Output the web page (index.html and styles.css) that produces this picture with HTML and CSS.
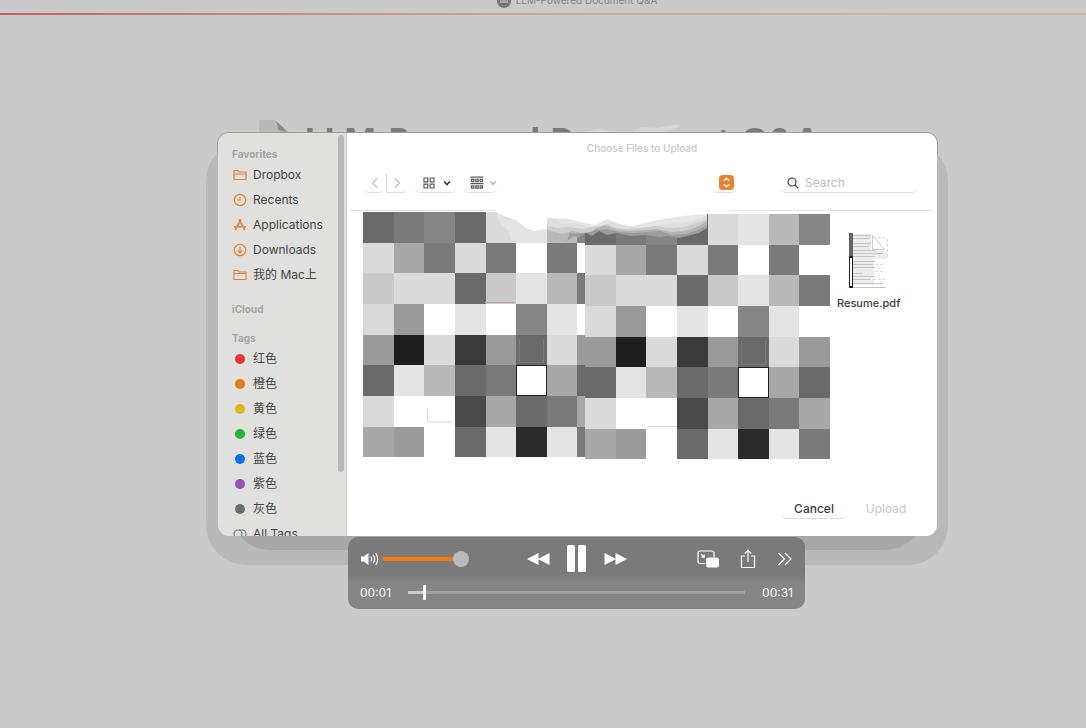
FILE: index.html
```html
<!DOCTYPE html>
<html lang="en">
<head>
<meta charset="utf-8">
<title>LLM-Powered Document Q&amp;A</title>
<link rel="stylesheet" href="styles.css">
</head>
<body>
<header class="tabbar">
  <svg class="tab-icon" viewBox="0 0 14 14" aria-hidden="true"><circle cx="7" cy="7" r="7" fill="#777"/><path d="M3 5h8v4H3z" fill="#a8a8a8"/></svg>
  <span>LLM-Powered Document Q&amp;A</span>
</header>
<main class="page">
  <div class="page-title">
    <svg class="title-icon" viewBox="0 0 30 40" aria-hidden="true"><path d="M0 0h16l14 12v28H0z" fill="#b9b9b9"/><path d="M14 0q5 2 5 10l9 2Q22 4 14 0z" fill="#8c8c8c"/></svg>
    <h1>LLM-Powered Document Q&amp;A</h1>
    <svg class="smudge" viewBox="0 0 110 14" aria-hidden="true"><path fill="#d6d6d6" d="M0 9l12-3 14 2 22 1 8-5 16 1 22-4-2 4-14 4 6 5H0z"/></svg>
  </div>

  <section class="dialog" role="dialog" aria-labelledby="dialog-title">
    <nav class="sidebar" aria-label="Locations">
      <h2>Favorites</h2>
      <a href="#"><svg viewBox="0 0 14 14"><path d="M1 11.5v-9h4l1.200 1.500H13v7.500zM1 6h12"/></svg>Dropbox</a>
      <a href="#"><svg viewBox="0 0 14 14"><circle cx="7" cy="7" r="5.700"/><path d="M7 3.500V7H4"/></svg>Recents</a>
      <a href="#"><svg viewBox="0 0 14 14"><path d="M6 1.500l5.800 10.500M8 1.500L2.200 12M.800 8.800h8M11 8.800h2.200" stroke-width="1.600"/></svg>Applications</a>
      <a href="#"><svg viewBox="0 0 14 14"><circle cx="7" cy="7" r="5.700"/><path d="M7 3.800v6M4.800 7.700L7 9.900l2.200-2.200"/></svg>Downloads</a>
      <a href="#"><svg viewBox="0 0 14 14"><path d="M1 11.500v-9h4l1.200 1.500H13v7.500zM1 5.500h12"/></svg>我的 Mac上</a>
      <h2 class="section">iCloud</h2>
      <h2 class="section">Tags</h2>
      <a href="#"><i class="dot red"></i>红色</a>
      <a href="#"><i class="dot orange"></i>橙色</a>
      <a href="#"><i class="dot yellow"></i>黄色</a>
      <a href="#"><i class="dot green"></i>绿色</a>
      <a href="#"><i class="dot blue"></i>蓝色</a>
      <a href="#"><i class="dot purple"></i>紫色</a>
      <a href="#"><i class="dot gray"></i>灰色</a>
      <a href="#"><svg class="all-tags" viewBox="0 0 14 14"><circle cx="5" cy="7" r="4"/><path d="M6 3h3a4 4 0 0 1 0 8"/></svg>All Tags</a>
      <span class="scrollbar"></span>
    </nav>

    <div class="browser">
      <h2 class="dialog-title" id="dialog-title">Choose Files to Upload</h2>
      <div class="toolbar">
        <div class="history">
          <button type="button" class="tool faint" aria-label="Back"><svg viewBox="0 0 10 12" width="10" height="12"><path d="M7 1.500L2.500 6 7 10.500"/></svg></button>
          <button type="button" class="tool faint" aria-label="Forward"><svg viewBox="0 0 10 12" width="10" height="12"><path d="M3 1.500L7.500 6 3 10.500"/></svg></button>
        </div>
        <button type="button" class="tool view" aria-label="Icon view">
          <svg viewBox="0 0 12 12" width="12" height="12"><path d="M1 1h3.800v3.800H1zM7.200 1H11v3.800H7.200zM1 7.200h3.800V11H1zM7.200 7.200H11V11H7.200z"/></svg>
          <svg viewBox="0 0 8 8" width="8" height="8" class="dark"><path d="M1 2.500l3 3 3-3" stroke-width="1.700"/></svg>
        </button>
        <button type="button" class="tool group" aria-label="Group items">
          <svg viewBox="0 0 14 14" width="14" height="14"><path d="M.500 1.200h13M.500 7.700h13"/><path d="M1.500 3.300h2.400v2.400H1.500zM5.800 3.300h2.400v2.400H5.800zM10.100 3.300h2.400v2.400h-2.400zM1.500 9.800h2.400v2.400H1.500zM5.800 9.800h2.400v2.400H5.800zM10.100 9.800h2.400v2.400h-2.400z"/></svg>
          <svg viewBox="0 0 8 8" width="8" height="8" class="pale"><path d="M1.500 2.500L4 5.200l2.500-2.700" stroke-width="1.300"/></svg>
        </button>
        <button type="button" class="tool location" aria-label="Choose location">
          <svg viewBox="0 0 15 15" width="15" height="15"><rect width="15" height="15" rx="3.500" fill="#e8842c" stroke="none"/><path d="M4.800 5.800l2.700-2.600 2.700 2.600M4.800 9.200l2.700 2.600 2.700-2.600" stroke="#fff" stroke-width="1.500"/></svg>
        </button>
        <label class="search">
          <svg viewBox="0 0 12 12" width="12" height="12" aria-hidden="true"><circle cx="5" cy="5" r="4"/><path d="M8 8l3.300 3.300"/></svg>
          <input type="search" placeholder="Search" aria-label="Search">
        </label>
      </div>

      <div class="files">
        <svg class="mosaic" viewBox="0 0 467 248" aria-hidden="true">
          <defs>
            <g id="tiles" shape-rendering="crispEdges">
              <path fill="#6a6a6a" d="M0 0h31v31H0zM92 0h31v31H92zM92 61h31v31H92zM153 123h31v31h-31zM0 153h31v31H0zM92 153h31v31H92zM214 153h31v31h-31zM153 184h31v31h-31zM92 215h31v30H92z"/>
              <path fill="#7a7a7a" d="M31 0h30v31H31zM61 31h31v30H61zM123 31h30v30h-30zM184 31h30v30h-30zM214 61h31v31h-31zM123 153h30v31h-30zM184 184h30v31h-30zM214 215h31v30h-31z"/>
              <path fill="#858585" d="M61 0h31v31H61zM214 0h31v31h-31zM153 92h31v31h-31z"/>
              <path fill="#dadada" d="M123 0h30v31h-30zM0 31h31v30H0zM92 31h31v30H92zM31 61h61v31H31zM0 92h31v31H0zM61 123h31v30H61zM184 123h30v30h-30zM0 184h31v31H0z"/>
              <path fill="#e4e4e4" d="M153 0h31v31h-31zM153 61h31v31h-31zM92 92h31v31H92zM184 92h30v31h-30zM31 153h30v31H31zM123 215h30v30h-30zM184 215h30v30h-30z"/>
              <path fill="#b9b9b9" d="M184 0h30v31h-30zM184 61h30v31h-30zM61 153h31v31H61z"/>
              <path fill="#a8a8a8" d="M31 31h30v30H31zM184 153h30v31h-30zM123 184h30v31h-30zM214 184h31v31h-31zM0 215h31v30H0z"/>
              <path fill="#c9c9c9" d="M0 61h31v31H0zM123 61h30v31h-30z"/>
              <path fill="#9a9a9a" d="M31 92h30v31H31zM0 123h31v30H0zM123 123h30v30h-30zM214 123h31v30h-31zM31 215h30v30H31z"/>
              <path fill="#1e1e1e" d="M31 123h30v30H31z"/>
              <path fill="#3a3a3a" d="M92 123h31v30H92z"/>
              <path fill="#4a4a4a" d="M92 184h31v31H92z"/>
              <path fill="#2b2b2b" d="M153 215h31v30h-31z"/>
              <path fill="#fff" stroke="#222" d="M153.500 153.500h30v30h-30z"/>
              <path fill="none" stroke="#7a7a7a" d="M156.500 127v23h24v-23"/>
            </g>
          </defs>
          <use href="#tiles" x="0" y="1"/>
          <path fill="#fff" d="M222 0h245v248H222z"/>
          <use href="#tiles" x="222" y="3"/>
          <path fill="#9c9c9c" d="M214 0h130v17l-8 5-12 3-8 2-12-2-8 1-12-2-16 1-14-3-10 2-8-4-7 5-6-3-8 5-4-2-7 5z"/>
          <path fill="#b4b4b4" d="M214 0h130v14l-9 5-12 4-14 1-12-4-14 1-12 1-16-1-10-3-8 1-6-2-8 4-9 2-10-1z"/>
          <path fill="#cdcdcd" d="M184 0h160v10l-8 5-14 5-14 1-14-3-14 1-16 1-12-2-10-4-6 2-8 5-10 1-8-2-10 3-12-3-8-3z"/>
          <path fill="#dedede" d="M184 0h160v8l-22 8-16 1-14-2-14 2-14 1-14-2-8-5-10 4-12 3-14-2-10 1-12-2z"/>
          <path fill="#e6e6e6" d="M184 0h160v5l-18 6-22 2-14 2-14 2-14-2-12-5-8 4-14 2-18-4-12 1z"/>
          <path fill="#e4e4e4" d="M133 1h20v29h-4l-4-10-8-8z"/>
          <path fill="#fff" d="M131 0h213v3l-24 2-26 4-24 6-14-2-12-5-12 6-10-2-16-4-22-1v11l-13 2-8-3-10-8-12-4z"/>
          <g fill="none" stroke="#d8d8d8"><path d="M64.500 198v13h25M286 215.500h28"/><path stroke="#c0aaa6" d="M122 91.500h30"/></g>
        </svg>
        <figure class="file">
          <svg viewBox="0 0 40 56" width="40" height="56" aria-hidden="true">
            <path fill="#ececec" d="M3 1h19v17h16v8H25v26H3z"/>
            <path fill="none" stroke="#c4c4c4" d="M4 2.500h18M4 5.500h17M4 10.500h18M4 13.500h16M4 17.500h22M4 20.500h30M4 23.500h22M4 28.500h22M4 31.500h20M4 34.500h22M4 40.500h10M4 43.500h22M4 46.500h18M4 50.500h30M4 54.500h33"/>
            <path fill="none" stroke="#d8d8d8" stroke-dasharray="3 2" d="M24 4.500h12M26 31.500h8M26 38.500h10M24 46.500h12M38.500 6v20"/>
            <path fill="#fff" stroke="#ccc" d="M23.500 2.500v14h12z"/>
            <path fill="#666" d="M0 0h4v24H0z"/><path fill="#222" d="M0 23h4v32H0z"/><path fill="#fff" d="M1 25h2v28H1z"/>
          </svg>
          <figcaption>Resume.pdf</figcaption>
        </figure>
      </div>

      <footer class="actions">
        <button type="button" class="cancel">Cancel</button>
        <button type="button" class="upload" disabled>Upload</button>
      </footer>
    </div>
  </section>

  <section class="player" aria-label="Video player">
    <div class="controls">
      <div class="volume">
        <svg viewBox="0 0 20 14" width="20" height="14" aria-hidden="true"><path fill="#fff" d="M1 4.500h3L8.500 1v12L4 9.500H1z"/><path fill="none" stroke="#fff" stroke-width="1.200" stroke-linecap="round" d="M11 5q1.200 2 0 4M13.400 3.200q2.400 3.800 0 7.600M16 1.500q3.400 5.500 0 11"/></svg>
        <input type="range" class="volume-range" min="0" max="100" value="100" aria-label="Volume">
      </div>
      <div class="transport">
        <button type="button" aria-label="Rewind"><svg viewBox="0 0 24 14" width="24" height="14"><path d="M12.500 1v12L1 7zM23.500 1v12L12 7z"/></svg></button>
        <button type="button" aria-label="Pause"><svg viewBox="0 0 20 28" width="20" height="28"><rect width="8" height="27" rx="1.500"/><rect x="11" width="8" height="27" rx="1.500"/></svg></button>
        <button type="button" aria-label="Fast forward"><svg viewBox="0 0 24 14" width="24" height="14"><path d="M.500 1v12L12 7zM11.500 1v12L23 7z"/></svg></button>
      </div>
      <div class="extras">
        <button type="button" aria-label="Picture in picture"><svg viewBox="0 0 22 18" width="22" height="18"><path class="line" d="M8 13.500H3a2 2 0 0 1-2-2V3a2 2 0 0 1 2-2h12a2 2 0 0 1 2 2v4M4 4l3 3M7.200 4.400v2.800H4.400"/><rect x="9" y="7.500" width="13" height="10" rx="2.500"/></svg></button>
        <button type="button" aria-label="Share"><svg viewBox="0 0 16 20" width="16" height="20"><path class="line" d="M5 7H1.500v11.500h13V7H11M8 13V1.500M4.800 4.500L8 1.300l3.200 3.200"/></svg></button>
        <button type="button" aria-label="More"><svg viewBox="0 0 16 14" width="16" height="14"><path class="line" d="M1.500 1l6 6-6 6M8 1l6 6-6 6"/></svg></button>
      </div>
    </div>
    <div class="timeline">
      <span>00:01</span>
      <input type="range" class="seek" min="0" max="31" value="1.4" step="any" aria-label="Position">
      <span>00:31</span>
    </div>
  </section>
</main>
</body>
</html>
```
FILE: styles.css
```css
* { box-sizing: border-box; }

body {
  margin: 0;
  min-height: 100vh;
  overflow: hidden;
  background: #cacaca;
  color: #3c3c3c;
  font: 12px/16px Inter, "Noto Sans CJK SC", sans-serif;
}

h1, h2, figure { margin: 0; }
button { padding: 0; border: 0; background: none; color: inherit; font: inherit; }
button svg { display: block; }

.tabbar {
  display: flex;
  align-items: flex-end;
  justify-content: center;
  gap: 5px;
  height: 15px;
  padding: 0 0 5px 68px;
  overflow: hidden;
  border-bottom: 2px solid;
  border-image: linear-gradient(90deg, #c4625c, #c9a592 45%, #cdb99f) 1;
  color: #858585;
  font-size: 10px;
}
.tab-icon { width: 14px; height: 14px; }

.page { isolation: isolate; }
.page-title {
  position: relative;
  display: flex;
  justify-content: center;
  gap: 15px;
  padding: 105px 8px 0 0;
}
.title-icon { width: 30px; height: 40px; }
h1 { color: #7a7a7a; font: 700 35px/42px "Open Sans", sans-serif; white-space: nowrap; }
.smudge {
  position: absolute;
  top: 108px;
  left: 585px;
  width: 110px;
  height: 14px;
}

.dialog {
  position: absolute;
  top: 133px;
  left: 218px;
  display: flex;
  width: 719px;
  height: 403px;
  border-radius: 11px;
  box-shadow: 0 0 0 1px #9e9e9e;
  isolation: isolate;
}
.dialog::before, .dialog::after {
  content: "";
  position: absolute;
  z-index: -2;
  background: #b9b9b9;
  inset: 8px -11px -29px -12px;
  border-radius: 40px;
}
.dialog::after {
  z-index: -1;
  inset: 300px 12px -14px 12px;
  background: #a8a8a8;
}

.sidebar {
  position: relative;
  width: 129px;
  padding: 13px 0 0 14px;
  overflow: hidden;
  border-right: 1px solid #cfcfcf;
  border-radius: 11px 0 0 11px;
  background: #e0e0df;
}
.sidebar h2 { color: #a3a3a3; font-size: 10px; font-weight: 700; line-height: 16px; }
.sidebar .section { margin-top: 14px; }
.sidebar .section + .section { margin-top: 13px; }
.sidebar a {
  display: flex;
  align-items: center;
  gap: 6px;
  height: 25px;
  padding-left: 1px;
  color: #444;
  text-decoration: none;
  white-space: nowrap;
}
.sidebar svg { width: 14px; height: 14px; fill: none; stroke: #e08238; stroke-width: 1.2; }
.sidebar .all-tags { stroke: #777; }
.dot { width: 10px; height: 10px; margin: 0 2px; border-radius: 50%; }
.red { background: #e8372f; }
.orange { background: #e57715; }
.yellow { background: #e3b317; }
.green { background: #1fb52d; }
.blue { background: #0670e8; }
.purple { background: #9550bb; }
.gray { background: #6c6c6c; }
.scrollbar {
  position: absolute;
  top: 2px;
  right: 2px;
  width: 6px;
  height: 337px;
  border-radius: 3px;
  background: #b7b7b7;
}

.browser {
  display: flex;
  flex: 1;
  flex-direction: column;
  min-width: 0;
  border-radius: 0 11px 11px 0;
  background: #fff;
}
.dialog-title {
  padding-top: 7px;
  color: #c8c8c8;
  font-size: 10px;
  font-weight: 500;
  text-align: center;
}

.toolbar {
  display: flex;
  align-items: center;
  gap: 8px;
  height: 55px;
  padding: 0 20px 1px 17px;
  background: linear-gradient(90deg, #e2e2e2 145px, #fff 145px, #fff 380px, #e2e2e2 380px) 3px 100% / calc(100% - 7px) 1px no-repeat;
}
.history { display: flex; gap: 1px; }
.tool, .search {
  display: flex;
  align-items: center;
  justify-content: center;
  height: 20px;
  border-bottom: 1px solid #dedede;
  border-radius: 5px;
}
.tool svg, .search svg { fill: none; stroke: #5c5c5c; stroke-width: 1.2; }
.faint { width: 21px; }
.faint svg { stroke: #bdbdbd; }
.faint + .faint { border-left: 1px solid #dedede; border-radius: 0 5px 5px 0; }
.view { gap: 8px; width: 41px; padding-left: 3px; }
.tool .dark { stroke: #333; }
.group { gap: 5px; width: 33px; padding-left: 5px; }
.tool .pale { stroke: #aaa; }
.location { justify-content: flex-end; width: 23px; margin-left: auto; padding-right: 1px; }
.search { gap: 6px; width: 136px; margin-left: 38px; padding-left: 6px; }
.search svg { flex: none; stroke: #444; }
.search input {
  flex: 1;
  min-width: 0;
  padding: 0;
  border: 0;
  outline: 0;
  background: none;
  font: inherit;
}
.search input::placeholder { color: #bdbdbd; }

.files { display: flex; align-items: flex-start; gap: 7px; padding-left: 16px; }
.mosaic { flex: none; width: 467px; height: 248px; }
.file { display: flex; flex-direction: column; align-items: center; gap: 6px; padding-top: 22px; font-size: 11px; font-weight: 500; }

.actions { display: flex; justify-content: flex-end; gap: 8px; margin-top: auto; padding: 0 20px 17px 0; }
.actions button { height: 20px; border-radius: 5px; font-weight: 500; }
.actions .cancel { width: 66px; border-bottom: 1px solid #dedede; }
.actions .upload { width: 62px; color: #c6c6c6; font-weight: 400; }

.player {
  position: absolute;
  top: 537px;
  left: 348px;
  width: 457px;
  padding: 6px 12px 8px;
  border-radius: 10px;
  background: linear-gradient(#7a7a7a 50%, #858585 65%);
  color: #fff;
}
.controls { display: grid; grid-template-columns: 1fr auto 1fr; align-items: center; height: 32px; }
.volume { display: flex; align-items: center; gap: 2px; }
.transport, .extras { display: flex; align-items: center; }
.transport { gap: 17px; }
.extras { justify-content: flex-end; gap: 21px; }
.player button svg { fill: #fff; }
.player .line { fill: none; stroke: #fff; stroke-width: 1.2; }

input[type="range"] { margin: 0; appearance: none; background: none; }
.volume-range { width: 87px; height: 16px; }
.volume-range::-webkit-slider-runnable-track { height: 4px; border-radius: 2px; background: #f57a05; }
.volume-range::-webkit-slider-thumb {
  width: 16px;
  height: 16px;
  margin-top: -6px;
  appearance: none;
  border-radius: 50%;
  background: #bababa;
}
.timeline { display: flex; align-items: center; gap: 17px; height: 26px; padding-top: 9px; }
.seek { flex: 1; min-width: 0; height: 16px; }
.seek::-webkit-slider-runnable-track { height: 3px; background: linear-gradient(90deg, #ccc 16px, #a1a1a1 16px); }
.seek::-webkit-slider-thumb {
  width: 3px;
  height: 15px;
  margin-top: -6px;
  appearance: none;
  border-radius: 1px;
  background: #fff;
}
```
